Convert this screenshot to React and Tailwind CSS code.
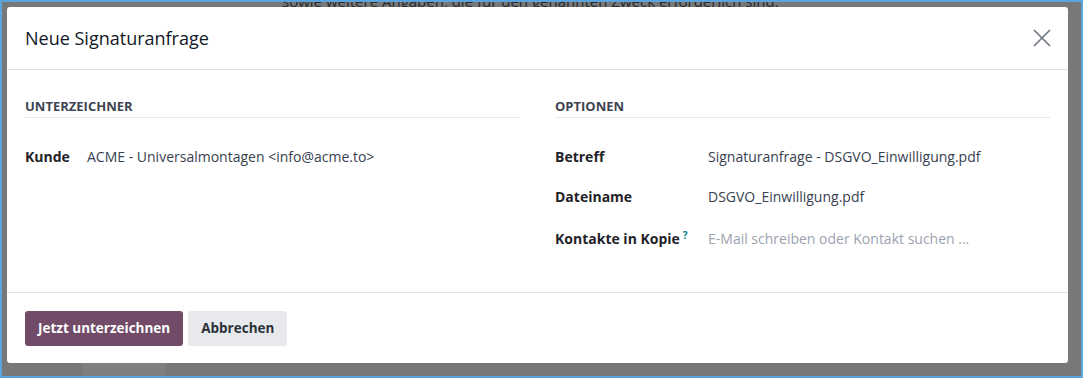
import React from 'react';

// Field row inside a section
const Field = ({ label, labelWidth, help, children, className = '' }) => (
  <div className={`flex items-center ${className}`}>
    <div className={`${labelWidth} shrink-0 font-bold text-[#1f2328]`}>
      {label}
      {help && <sup className="ml-[3px] text-[10px] font-bold text-[#017e84]">?</sup>}
    </div>
    <div className="text-[#374151]">{children}</div>
  </div>
);

const App = () => {
  return (
    <div
      className="relative w-[1083px] h-[378px] overflow-hidden border-2 border-[#5aa5de] bg-[#787878]"
      style={{ fontFamily: '"Open Sans", "Noto Sans", sans-serif' }}
    >
      {/* backdrop page content */}
      <div className="absolute left-[280px] top-[-12px] text-[15px] text-[#2a2a2a] whitespace-nowrap">
        sowie weitere Angaben, die für den genannten Zweck erforderlich sind.
      </div>
      <div className="absolute left-[81px] top-[361px] w-[82px] h-[20px] bg-[#7f7f7f]" />

      {/* modal */}
      <div className="relative ml-[5px] mt-[5px] w-[1061px] h-[356px] bg-white rounded-[3px] flex flex-col text-[14px]">
        {/* header */}
        <div className="h-[63px] shrink-0 flex items-center justify-between px-[18px] border-b border-[#dee2e6]">
          <h1 className="text-[18px] text-[#111827]">Neue Signaturanfrage</h1>
          <svg width="18" height="18" viewBox="0 0 18 18" className="mr-[-1px] text-[#6b7280]">
            <path d="M1 1 L17 17 M17 1 L1 17" stroke="currentColor" strokeWidth="1.6" fill="none" />
          </svg>
        </div>

        {/* body */}
        <div className="flex-1 px-[18px] pt-[28px] grid grid-cols-2 gap-x-[35px]">
          <div>
            <div className="text-[13px] leading-[16px] font-bold uppercase text-[#3d4451] pb-[3px] border-b border-[#e5e7eb]">
              Unterzeichner
            </div>
            <Field label="Kunde" labelWidth="w-[62px]" className="mt-[28px]">
              ACME - Universalmontagen &lt;info@acme.to&gt;
            </Field>
          </div>
          <div>
            <div className="text-[13px] leading-[16px] font-bold uppercase text-[#3d4451] pb-[3px] border-b border-[#e5e7eb]">
              Optionen
            </div>
            <div className="flex flex-col mt-[28px]">
              <Field label="Betreff" labelWidth="w-[153px]">
                Signaturanfrage - DSGVO_Einwilligung.pdf
              </Field>
              <Field label="Dateiname" labelWidth="w-[153px]" className="mt-[19px]">
                DSGVO_Einwilligung.pdf
              </Field>
              <Field label="Kontakte in Kopie" labelWidth="w-[153px]" help className="mt-[21px]">
                <span className="text-[#9ca3af]">E-Mail schreiben oder Kontakt suchen ...</span>
              </Field>
            </div>
          </div>
        </div>

        {/* footer */}
        <div className="shrink-0 border-t border-[#dee2e6] px-[18px] pt-[18px] pb-[17px] flex gap-[5px]">
          <button className="h-[35px] px-[13px] rounded-[3px] bg-[#714b67] text-white font-bold text-[13.5px]">
            Jetzt unterzeichnen
          </button>
          <button className="h-[35px] px-[13px] rounded-[3px] bg-[#e7e9ed] text-[#2b3139] font-bold text-[13.5px]">
            Abbrechen
          </button>
        </div>
      </div>
    </div>
  );
};

export default App;
